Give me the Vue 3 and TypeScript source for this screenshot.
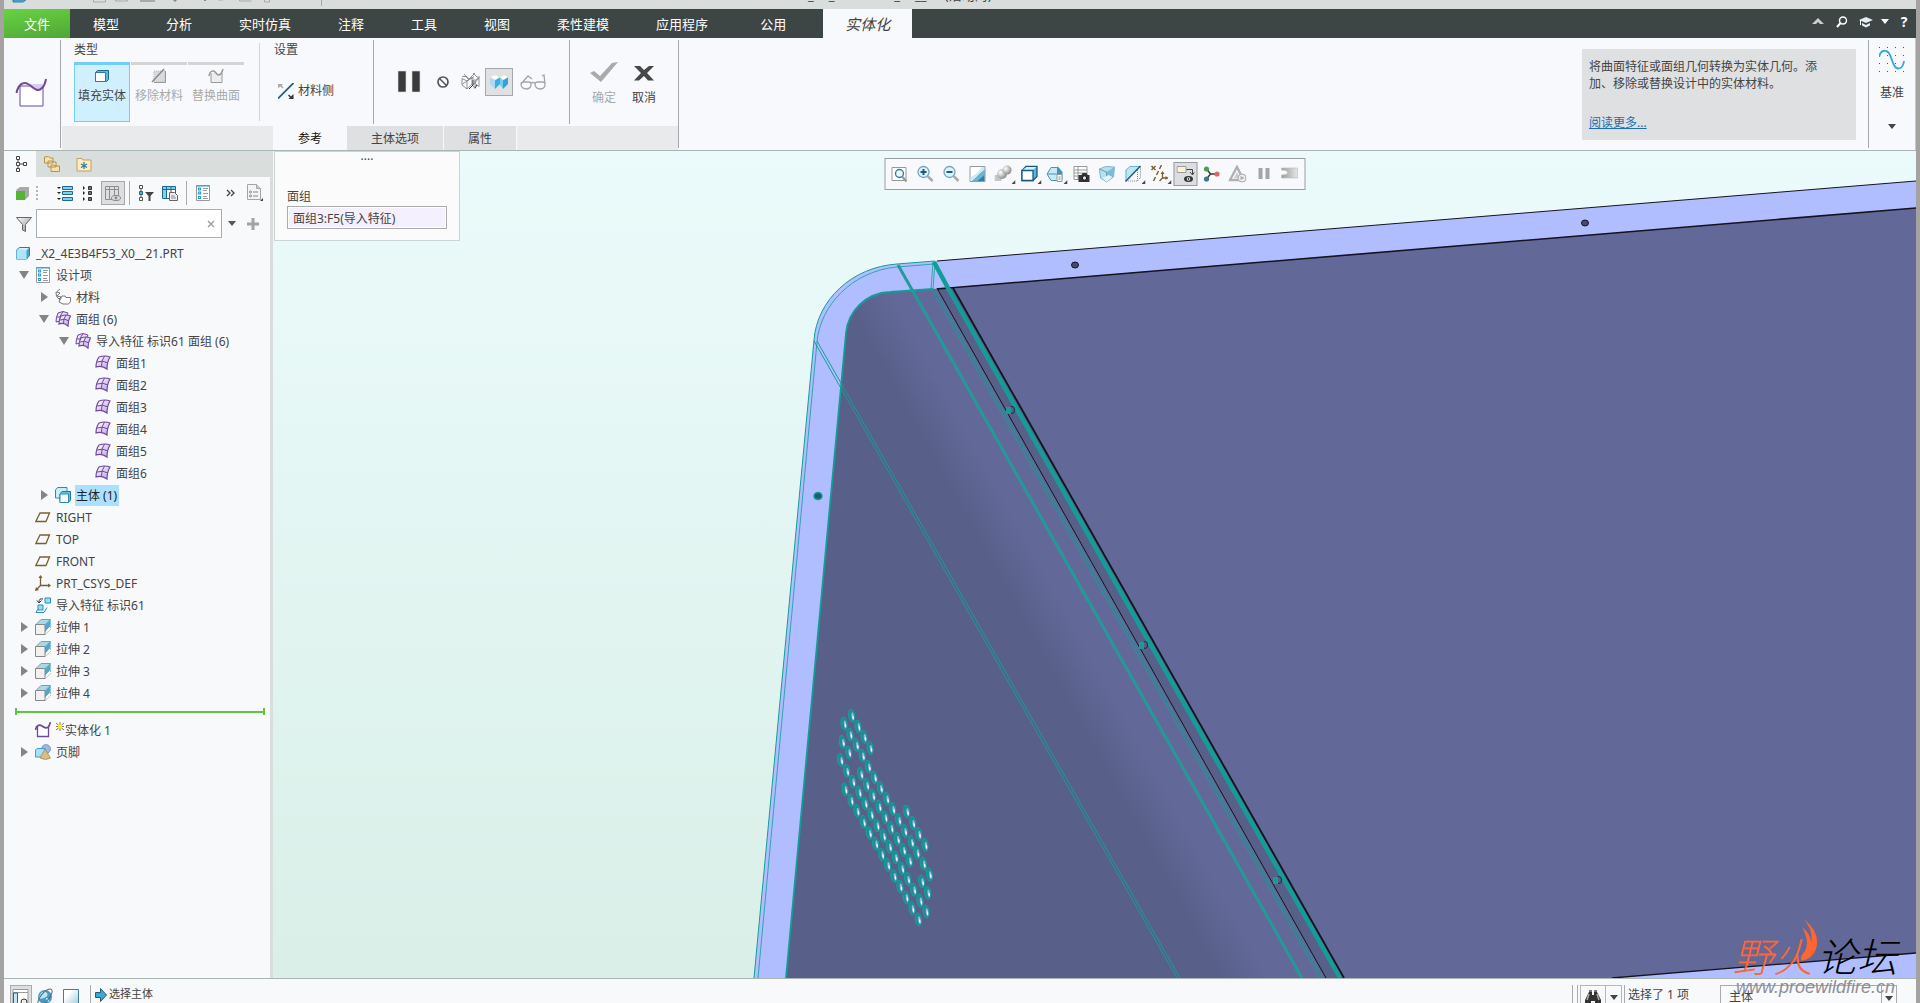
<script setup lang="ts">
import { ref } from 'vue'

interface TreeRow {
  label: string
  icon: string
  level: number
  state?: 'open' | 'closed'
  selected?: boolean
}

const menuTabs: string[] = ['模型', '分析', '实时仿真', '注释', '工具', '视图', '柔性建模', '应用程序']

const modelRows: TreeRow[] = [
  { label: '_X2_4E3B4F53_X0__21.PRT', icon: 'part', level: 0 },
  { label: '设计项', icon: 'items', level: 1, state: 'open' },
  { label: '材料', icon: 'material', level: 2, state: 'closed' },
  { label: '面组 (6)', icon: 'quilts', level: 2, state: 'open' },
  { label: '导入特征 标识61 面组 (6)', icon: 'quilts', level: 3, state: 'open' },
  { label: '面组1', icon: 'quilt', level: 4 },
  { label: '面组2', icon: 'quilt', level: 4 },
  { label: '面组3', icon: 'quilt', level: 4 },
  { label: '面组4', icon: 'quilt', level: 4 },
  { label: '面组5', icon: 'quilt', level: 4 },
  { label: '面组6', icon: 'quilt', level: 4 },
  { label: '主体 (1)', icon: 'bodies', level: 2, state: 'closed', selected: true },
  { label: 'RIGHT', icon: 'plane', level: 1 },
  { label: 'TOP', icon: 'plane', level: 1 },
  { label: 'FRONT', icon: 'plane', level: 1 },
  { label: 'PRT_CSYS_DEF', icon: 'csys', level: 1 },
  { label: '导入特征 标识61', icon: 'import', level: 1 },
  { label: '拉伸 1', icon: 'extrude', level: 1, state: 'closed' },
  { label: '拉伸 2', icon: 'extrude', level: 1, state: 'closed' },
  { label: '拉伸 3', icon: 'extrude', level: 1, state: 'closed' },
  { label: '拉伸 4', icon: 'extrude', level: 1, state: 'closed' },
]

const viewTools: { icon: string; name: string; menu?: boolean; on?: boolean }[] = [
  { icon: 'refit', name: '重新调整' },
  { icon: 'zoomin', name: '放大' },
  { icon: 'zoomout', name: '缩小' },
  { icon: 'repaint', name: '重画' },
  { icon: 'render', name: '渲染选项', menu: true },
  { icon: 'style', name: '显示样式', menu: true },
  { icon: 'saved', name: '已保存方向', menu: true },
  { icon: 'viewmgr', name: '视图管理器' },
  { icon: 'persp', name: '透视图' },
  { icon: 'section', name: '截面', menu: true },
  { icon: 'datumshow', name: '基准显示过滤器', menu: true },
  { icon: 'annot', name: '注释显示', on: true },
  { icon: 'spin', name: '旋转中心' },
  { icon: 'simul', name: '仿真' },
  { icon: 'pausegrey', name: '暂停仿真' },
  { icon: 'simres', name: '仿真结果' },
]

/* Speaker perforations, in thirds of a scene unit from the grille's corner */
const holes: number[][] = [
  [95, 77], [72, 101], [114, 109], [90, 133], [132, 141], [67, 156], [109, 165], [150, 174],
  [86, 187], [127, 197], [62, 210], [145, 230], [80, 243], [122, 252], [163, 262], [98, 275],
  [140, 285], [181, 294], [75, 298], [117, 307], [158, 317], [200, 326], [93, 331], [135, 340],
  [177, 350], [218, 357], [260, 364], [111, 363], [153, 373], [195, 382], [236, 390], [278, 399],
  [130, 396], [171, 406], [213, 414], [254, 423], [296, 432], [148, 429], [190, 438], [232, 447],
  [274, 456], [315, 465], [167, 461], [208, 470], [250, 480], [291, 488], [185, 493], [226, 502],
  [268, 512], [310, 521], [203, 525], [245, 535], [328, 553], [222, 558], [263, 567], [305, 574],
  [240, 590], [281, 599], [323, 608], [258, 622], [300, 632], [276, 655], [318, 664], [295, 688],
]

const sidePins: number[][] = [[1009, 410], [1142, 645], [1276, 880]]

const search = ref('')
const quilt = ref('面组3:F5(导入特征)')
</script>

<template>
  <svg class="sprite" aria-hidden="true">
    <defs>
      <linearGradient id="g-blue" x1="0" y1="0" x2="1" y2="1">
        <stop offset="0" stop-color="#e8f8ff" /><stop offset="1" stop-color="#5fb8e0" />
      </linearGradient>
      <linearGradient id="g-quilt" x1="0" y1="0" x2="1" y2="1">
        <stop offset="0" stop-color="#ffffff" /><stop offset="1" stop-color="#b9a0e0" />
      </linearGradient>
      <linearGradient id="g-grey" x1="0" y1="0" x2="1" y2="1">
        <stop offset="0" stop-color="#ffffff" /><stop offset="1" stop-color="#8a8a8a" />
      </linearGradient>
      <linearGradient id="g-flap" x1="0" y1="0" x2="1" y2="0">
        <stop offset="0" stop-color="#9a9a9a" /><stop offset="1" stop-color="#e6e6e6" />
      </linearGradient>
      <linearGradient id="g-page" x1="0" y1="0" x2="1" y2="1">
        <stop offset="0.3" stop-color="#ffffff" /><stop offset="1" stop-color="#9cc8dc" />
      </linearGradient>
      <radialGradient id="g-ball" cx="0.35" cy="0.35" r="0.8">
        <stop offset="0" stop-color="#fff" /><stop offset="1" stop-color="#777" />
      </radialGradient>
    </defs>
    <symbol id="i-solidify" viewBox="0 0 32 32">
      <path d="M5 8h23v20H5z" fill="#fff" stroke="#6b4b9b" />
      <path d="M11 6h17v3q-4 5-8 3z" fill="#d9ccf2" />
      <path d="M1.500 15C3 7 8 3 13 6s9 9 14 4q3-3 4-9" fill="none" stroke="#70479c" stroke-width="2" />
    </symbol>
    <symbol id="i-solidsmall" viewBox="0 0 16 16">
      <path d="M2.500 5v9.500h11V5" fill="#fff" stroke="#6b4b9b" stroke-width="1.300" />
      <path d="M.5 8C1 4 4 2 7 4s5 3 7 0l1.500-4" fill="none" stroke="#70479c" stroke-width="1.700" />
    </symbol>
    <symbol id="i-fill" viewBox="0 0 16 16">
      <path d="M1.500 4.500l2-2h11v9l-2 2h-11z" fill="#5fb8e0" stroke="#1f6b8f" />
      <path d="M1.500 4.500h10v9h-10z" fill="#fff" stroke="#2d7da3" />
    </symbol>
    <symbol id="i-remove" viewBox="0 0 16 16">
      <path d="M3 3h11v11H3z" fill="#d9dadc" stroke="#b5b5b5" stroke-dasharray="1 1" />
      <path d="M14.500 3v11.500H3" fill="none" stroke="#999" /><path d="M1 14L13 1" stroke="#8c8c8c" stroke-width="1.500" />
    </symbol>
    <symbol id="i-replace" viewBox="0 0 16 16">
      <path d="M3 5v9.500h11V5" fill="#ededee" stroke="#9a9a9a" />
      <path d="M1 8C2 2 6 2 8 5s5 3 7-4" fill="none" stroke="#999" stroke-width="1.500" />
    </symbol>
    <symbol id="i-side" viewBox="0 0 16 16">
      <path d="M0 15.500L15.500 0" stroke="#1c6285" stroke-width="1.800" />
      <path d="M0 1h5L3.500 2.500l2 2-1 1-2-2L0 5z" fill="#aaa" /><path d="M15.500 16h-5l1.500-1.500-2-2 1-1 2 2 2.500-2.500z" fill="#333" />
    </symbol>
    <symbol id="i-pause" viewBox="0 0 24 24"><path d="M1 1h8v21H1zM15 1h8v21h-8z" fill="#3b3b3b" stroke="#ddd" stroke-width=".6" /></symbol>
    <symbol id="i-none" viewBox="0 0 16 16"><circle cx="8" cy="8" r="5" fill="none" stroke="#555" stroke-width="1.700" /><path d="M4.500 4.500l7 7" stroke="#555" stroke-width="1.500" /></symbol>
    <symbol id="i-wire" viewBox="0 0 20 20">
      <path d="M1 4.500h5l2 3-2 1.500-5-2.500v6.500l5 4 5-5V5.500L8 7.500M6 9v8M11 5.500l3 3 4-3v9l-4-3V8.500M14 8.500v8l-3-4M6 9l8-8M1.500 12L13 4.500M12 1l4 4h3M3 2l4 5M18 6l-7 8" fill="none" stroke="#858585" stroke-width=".9" />
      <path d="M8 17l4-4V8M14 16l2-3" fill="none" stroke="#333" />
    </symbol>
    <symbol id="i-shade" viewBox="0 0 20 20">
      <path d="M1 5l5 3v9l-5-5z" fill="#a6dcf5" /><path d="M6 8l5-3v7l-5 5z" fill="#3aaee4" /><path d="M11 5l3 3v9l-3-4z" fill="#7accee" /><path d="M14 8l5-3v7l-5 5z" fill="#2ea4de" />
      <path d="M1 5l5-2 5 2-5 3zM11 5l4-2 4 2-5 3z" fill="#fff" stroke="#e8e0c8" stroke-width=".6" />
    </symbol>
    <symbol id="i-glasses" viewBox="0 0 26 16">
      <g fill="none" stroke="#a5a5a5" stroke-width="1.300"><path d="M1 10q0-2 3-2h5q2 0 2 3t-4 4q-6 0-6-5zM15 10q0-2 3-2h5q2 0 2 3t-4 4q-6 0-6-5zM11 9q2-1 4 0M1 10L8 2l4 3M25 10l-1-9-2 1" /></g>
    </symbol>
    <symbol id="i-ok" viewBox="0 0 28 28"><path d="M0 14l4-2 6 5L22 4l6-1L11 23z" fill="#aaa" /></symbol>
    <symbol id="i-cancel" viewBox="0 0 28 28"><path d="M4 7h6l4 4 5-4h5l-7 7 7 7.500h-6L14 17l-5 4.500H4l7-7.500z" fill="#484848" /></symbol>
    <symbol id="i-sine" viewBox="0 0 26 26">
      <g fill="#555"><path d="M0 0h1v1H0zM8 0h1v1H8zM16 0h1v1h-1zM24 0h1v1h-1zM0 8h1v1H0zM8 8h1v1H8zM16 8h1v1h-1zM24 8h1v1h-1zM0 16h1v1H0zM8 16h1v1H8zM16 16h1v1h-1zM24 16h1v1h-1zM0 24h1v1H0zM8 24h1v1H8zM16 24h1v1h-1zM24 24h1v1h-1z" /></g>
      <path d="M0 10c1-5 4-7 7-6 5 1 5 9 8 14 3 6 9 4 10-4" fill="none" stroke="#3aa6d8" stroke-width="1.800" />
    </symbol>
    <symbol id="i-search" viewBox="0 0 12 12"><circle cx="7" cy="4.500" r="3.500" fill="none" stroke="#fff" stroke-width="1.500" /><path d="M4.500 7L1 11" stroke="#fff" stroke-width="2" /></symbol>
    <symbol id="i-learn" viewBox="0 0 14 12"><path d="M0 4l7-3 7 3-7 3zM3 7l4 2 4-2v2.500L7 11.500l-4-2z" fill="#e4eef5" /><path d="M1.500 4v5" stroke="#fff" /></symbol>
    <symbol id="i-up" viewBox="0 0 12 12"><path d="M0 8l6-6 6 6H8L6 6 4 8z" fill="#ccd0d0" /></symbol>
    <symbol id="i-down" viewBox="0 0 8 5"><path d="M0 0h8L4 5z" fill="currentColor" /></symbol>

    <symbol id="i-nav-tree" viewBox="0 0 16 16"><g fill="none" stroke="#444"><path d="M2.500 .5h3v3h-3zM2.500 6.500h3v3h-3zM2.500 12.500h3v3h-3zM9.500 6.500h3v3h-3z" /><path d="M4 4v2M4 10v2M6 8h3" /></g></symbol>
    <symbol id="i-nav-folders" viewBox="0 0 16 16"><g fill="#f7e2ae" stroke="#a98a4b" stroke-width=".9"><path d="M.5 1l4-.5L6 2h3v5H.5zM4 5h4l1 1h3v5H4zM7 9h3l1 1h4.500v5.500H7z" /></g></symbol>
    <symbol id="i-nav-fav" viewBox="0 0 16 16"><path d="M1 2.500h5l1 1.500h8v11H1z" fill="#fdecbf" stroke="#b99a5a" stroke-width=".9" /><path d="M8 6v7M5 8l6 3.500M11 8l-6 3.500" stroke="#2b7ca6" stroke-width="1.200" /></symbol>
    <symbol id="i-cubegreen" viewBox="0 0 16 16"><path d="M1 5l4-3h9v9l-4 4z" fill="#a8a8a8" /><path d="M1 6h9v9H1z" fill="#55b435" /></symbol>
    <symbol id="i-expand" viewBox="0 0 16 16"><g fill="#7fd0ee" stroke="#1f6b8f"><path d="M5.500 1.500h10v3h-10zM5.500 6.500h10v3h-10zM5.500 12.500h10v3h-10z" /></g><path d="M0 2h4L2 4zM0 7h4L2 9zM0 13h4l-2 2z" fill="#222" /></symbol>
    <symbol id="i-collapse" viewBox="0 0 16 16"><path d="M7.500 1.500h3v3h-3zM7.500 6.500h3v3h-3zM7.500 12.500h3v3h-3z" fill="#777" stroke="#333" /><path d="M2 1l2 2-2 2zM2 6l2 2-2 2zM2 12l2 2-2 2z" fill="#222" /></symbol>
    <symbol id="i-colview" viewBox="0 0 16 16"><path d="M.5 1.500h13v13H.5zM.5 4.500h13M4.500 2v12M9.500 2v12" fill="none" stroke="#8c8c8c" /><ellipse cx="11" cy="13" rx="4.500" ry="2.500" fill="#ddd" stroke="#888" /><circle cx="11" cy="13" r="1.400" fill="#888" /></symbol>
    <symbol id="i-treefilter" viewBox="0 0 16 16"><path d="M1.500 .5h3v3h-3zM1.500 12.500h3v3h-3z" fill="#fff" stroke="#555" /><path d="M1.500 6.500h3v3h-3z" fill="#4db6e0" stroke="#1f6b8f" /><path d="M3 4v2M3 10v2" stroke="#555" /><path d="M7 7h9l-3.500 4v5h-2v-5z" fill="#444" /></symbol>
    <symbol id="i-treecols" viewBox="0 0 16 16"><path d="M.5 1.500h13v12H.5z" fill="#fff" stroke="#1f6b8f" /><path d="M1 2h12v3H1zM1 5h4v8H1z" fill="#7fd0ee" /><path d="M.5 4.500h13M4.500 2v12M9 2v6" stroke="#1f6b8f" /><path d="M7.500 7.500h5l3 3v5h-8z" fill="#eee" stroke="#666" /><path d="M9 11h4M9 13h5" stroke="#888" /></symbol>
    <symbol id="i-items" viewBox="0 0 16 16"><path d="M1.500 .5h13v15h-13z" fill="#fff" stroke="#9a9a9a" /><path d="M1 1h14" stroke="#2b9dcc" /><g fill="none" stroke="#2b9dcc" stroke-width="1.200"><path d="M3.500 3h2v2h-2zM3.500 7h2v2h-2zM3.500 11.500h2v2h-2z" /></g><path d="M8 3.500h5M8 5.500h4M8 8.500h5M8 11.500h4M8 13.500h5" stroke="#999" /></symbol>
    <symbol id="i-more" viewBox="0 0 16 16"><path d="M4 5l3 3-3 3M8 5l3 3-3 3" fill="none" stroke="#444" stroke-width="1.300" /></symbol>
    <symbol id="i-docset" viewBox="0 0 18 18"><path d="M1.500 .5h9l4 4v11h-13z" fill="#f4f4f6" stroke="#a5a5a8" /><path d="M10.500 .5v4h4" fill="#ccc" stroke="#a5a5a8" /><path d="M7 8h5M7 12h5" stroke="#888" /><circle cx="4.500" cy="8" r="1" fill="none" stroke="#888" /><circle cx="4.500" cy="12" r="1" fill="none" stroke="#888" /><path d="M17 14v3h-3z" fill="#444" /></symbol>
    <symbol id="i-funnel" viewBox="0 0 16 16"><path d="M.5 1.500h15l-6 7v7l-3-1.500V8.500z" fill="url(#g-grey)" stroke="#666" /></symbol>
    <symbol id="i-plus" viewBox="0 0 12 12"><path d="M4.500 0h3v4.500H12v3H7.500V12h-3V7.500H0v-3h4.500z" fill="#a2a2a2" /></symbol>

    <symbol id="i-part" viewBox="0 0 16 16"><path d="M1.500 5l3-2.500h10v8l-3 3.500h-10z" fill="#4aa5d0" stroke="#2b7ca6" /><path d="M1.500 5h10v9h-10z" fill="#aee6fb" /><path d="M2 4.700L4.700 3H14l-2.500 2z" fill="#d8f3fd" /></symbol>
    <symbol id="i-material" viewBox="0 0 16 16"><path d="M6 9l1-2h3l1 1.500h4.500v4L13.500 15H8L4 13z" fill="#fff" stroke="#777" /><path d="M5 0L1.500 3 5 4 2 7l4 1-2 2M1 3q-1 5 4 8" fill="none" stroke="#777" /></symbol>
    <symbol id="i-quilt" viewBox="0 0 16 16"><path d="M4 2Q10 0 15 2q-3 5-3 12Q7 10 1 12 1 6 4 2z" fill="url(#g-quilt)" stroke="#70479c" stroke-width="1.200" /><path d="M9.500 1Q6 6 6.500 11.500M2 7q6-2 11 1" fill="none" stroke="#70479c" /></symbol>
    <symbol id="i-quilts" viewBox="0 0 16 16"><path d="M3 2q5-3 10 0-3 5-3 9-5-2-9 0 0-5 2-9z" fill="#ece4f8" stroke="#70479c" /><path d="M6 5q5-2 9.500 0Q13 9 13 15q-4-4-9-2 0-5 2-8z" fill="url(#g-quilt)" stroke="#70479c" stroke-width="1.200" /><path d="M11 4Q8 8 8.500 13M5 9q5-2 9 1M8 1Q6 3 5 6M2 6h3" fill="none" stroke="#70479c" /></symbol>
    <symbol id="i-bodies" viewBox="0 0 16 16"><path d="M.5 3l2-2.500H12v8l-2 2.500H.5z" fill="#c8eefb" stroke="#2b8db5" /><path d="M5 7l2-2.500h8.500V13l-2 2.500H5z" fill="#62c0e4" stroke="#1f7ba3" /><path d="M5 7h8.500v8.500H5z" fill="#fff" stroke="#2b8db5" /></symbol>
    <symbol id="i-plane" viewBox="0 0 16 16"><path d="M5 4h9.500L11 12.500H.8z" fill="none" stroke="#7a5f2f" stroke-width="1.300" /></symbol>
    <symbol id="i-csys" viewBox="0 0 16 16"><path d="M5.500 1v9.500H15M5.500 10.500L1 15" fill="none" stroke="#7a5f2f" stroke-width="1.300" /><path d="M5.500 0L3.500 3h4zM16 10.500l-3-2v4zM0 16l1-4 3 3z" fill="#7a5f2f" /></symbol>
    <symbol id="i-import" viewBox="0 0 16 16"><path d="M10 1h5.500v5H10z" fill="#9adcf5" stroke="#2b8db5" /><path d="M3 8h5v5H3z" fill="#9adcf5" stroke="#2b8db5" /><path d="M3 12l-2 3.500h8l3-5" fill="none" stroke="#2b8db5" /><path d="M8 2Q4 1 4 5M2 3.500L4 6l2.500-2.500" fill="none" stroke="#333" /></symbol>
    <symbol id="i-extrude" viewBox="0 0 16 16"><path d="M1 5.500L6 .5h9.500l-5.500 5z" fill="#a5d9ec" stroke="#8f9a9f" /><path d="M10 6l5.500-5.500V7L10 13z" fill="#4fa9ce" /><path d="M10 13l5.500-6v4L10.500 15.500z" fill="#fff" /><path d="M15.500 1v9.500l-5 5" fill="none" stroke="#7fc0d8" stroke-dasharray="2 1" /><path d="M.5 5.500H10v10H.5z" fill="#f1f1f1" stroke="#888" /></symbol>
    <symbol id="i-footer" viewBox="0 0 16 16"><circle cx="11" cy="5" r="4.500" fill="#9fb5e6" stroke="#6d86bd" stroke-width=".7" /><path d="M.5 6l1.500-1.500h8V11L8 13H.5z" fill="#a6e1f6" stroke="#3f9fc4" /><path d="M10 5l5.500 9q-4.500 3-10.500 0z" fill="#ddbd86" stroke="#9d7d4c" stroke-width=".7" /></symbol>

    <symbol id="i-refit" viewBox="0 0 18 18"><path d="M1.500 2.500h14v13h-14z" fill="#fff" stroke="#999" /><circle cx="9" cy="8.500" r="4" fill="#eaf7fd" stroke="#3a7c9b" stroke-width="1.400" /><path d="M12 12l4 4.500" stroke="#999" stroke-width="2.200" /></symbol>
    <symbol id="i-zoomin" viewBox="0 0 18 18"><circle cx="7" cy="7" r="5.500" fill="#def2fb" stroke="#6fa5bd" stroke-width="1.300" /><path d="M4 7h6M7 4v6" stroke="#165f86" stroke-width="2" /><path d="M11 11l5 5" stroke="#aaa" stroke-width="2.500" /></symbol>
    <symbol id="i-zoomout" viewBox="0 0 18 18"><circle cx="7" cy="7" r="5.500" fill="#def2fb" stroke="#6fa5bd" stroke-width="1.300" /><path d="M4 7h6" stroke="#165f86" stroke-width="2" /><path d="M11 11l5 5" stroke="#aaa" stroke-width="2.500" /></symbol>
    <symbol id="i-repaint" viewBox="0 0 18 18"><path d="M1.500 1.500h15v15h-15z" fill="#fff" stroke="#9a9a9a" /><path d="M16 2v14H5z" fill="#2d7fa7" /><path d="M2 16Q9 11 16 5V2h-3Q10 9 2 12z" fill="#cde9f5" /><path d="M3 16L16 5v5L9 16z" fill="#6db4d3" /></symbol>
    <symbol id="i-render" viewBox="0 0 18 18"><path d="M0 10h7v6H0z" fill="#c6c6c6" /><circle cx="7.500" cy="9" r="5" fill="url(#g-ball)" /><circle cx="12.500" cy="5" r="4.500" fill="url(#g-ball)" /></symbol>
    <symbol id="i-style" viewBox="0 0 18 18"><path d="M1.500 5.500l4-4h11v10l-4 4h-11z" fill="#62b3d6" stroke="#155a7c" stroke-width="1.300" /><path d="M2 5l4-3h10l-4 3.500z" fill="#d4eef8" /><path d="M1.500 5.500h11v10h-11z" fill="#fff" stroke="#155a7c" stroke-width="1.300" /></symbol>
    <symbol id="i-saved" viewBox="0 0 18 18"><path d="M.5 9l4-6.500H11v13H4.500z" fill="#c8e8f4" stroke="#4a93b3" /><path d="M11 1l5 6v8h-5z" fill="#3f95bb" /><path d="M1 9h10" stroke="#4a93b3" /><path d="M10.500 9.500h5v7h-5z" fill="#fff" stroke="#999" /><path d="M12 12h2M12 14h2" stroke="#888" /></symbol>
    <symbol id="i-viewmgr" viewBox="0 0 18 18"><path d="M1.500 1.500h13v13h-13zM1.500 5h13M1.500 8h13M1.500 11h13M5.500 2v12" fill="#fff" stroke="#999" /><path d="M6 10h3l1-2h4l1 2h2v7H6z" fill="#333" /><circle cx="12" cy="13" r="2.200" fill="#ddd" stroke="#111" /></symbol>
    <symbol id="i-persp" viewBox="0 0 18 18"><path d="M1 4l6-2.500L16 2l-1 10-7 5-6-4z" fill="#b9dfee" stroke="#7fb5cc" /><path d="M8 7l8-5-1 10-7 5z" fill="#7ebbd4" /><path d="M1 4l7 3v10" fill="none" stroke="#5c9fbc" /><path d="M4 13l6-3 4 2-6 5z" fill="#e6f5fa" /></symbol>
    <symbol id="i-section" viewBox="0 0 18 18"><path d="M1 5l4-3h11L2 15H1z" fill="#bfe6f5" /><path d="M1.500 16V5l4-3.500H16" fill="none" stroke="#6fb2cd" /><path d="M16 1.500v11l-3 3.500H2M13 5v11" fill="none" stroke="#888" stroke-dasharray="1 1" /><path d="M1 16.500L16 1" stroke="#1b5f80" stroke-width="1.500" /></symbol>
    <symbol id="i-datumshow" viewBox="0 0 18 18"><path d="M1 1l4 4M5 1L1 5M11 0L9 4M8 6l-2 4M5 12l-2 4" stroke="#7a5f2f" stroke-width="1.500" /><path d="M12 8v5h5M12 13l-3 3" fill="none" stroke="#7a5f2f" stroke-width="1.300" /><path d="M12 6l-2 3h4zM18 13l-3-2v4z" fill="#7a5f2f" /></symbol>
    <symbol id="i-annot" viewBox="0 0 18 18"><path d="M.5 1.500h9v6h-9z" fill="#fdf3cf" stroke="#9a9a9a" /><path d="M10 4.500h6v5M13.500 7L16 10l2-3" fill="none" stroke="#444" /><ellipse cx="12" cy="14" rx="4.500" ry="3" fill="#333" /><circle cx="12" cy="14" r="1.800" fill="#fff" /><circle cx="12" cy="14" r=".9" fill="#333" /></symbol>
    <symbol id="i-spin" viewBox="0 0 18 18"><path d="M4 4l4 5-4 5M8 9h6" fill="none" stroke="#333" stroke-width="1.400" /><circle cx="4" cy="4" r="2.600" fill="#4f9e55" /><circle cx="4" cy="14" r="2.600" fill="#3d7795" /><circle cx="14.500" cy="9" r="2.600" fill="#d9696b" /></symbol>
    <symbol id="i-simul" viewBox="0 0 18 18"><path d="M8.500 2L15 15H1.500z" fill="none" stroke="#b0b0b0" stroke-width="2.400" /><path d="M8.500 7l3 6h-6z" fill="#ccc" /><circle cx="13.500" cy="13" r="4" fill="#eee" stroke="#aaa" /><path d="M12 11l4 2-4 2z" fill="#aaa" /></symbol>
    <symbol id="i-pausegrey" viewBox="0 0 18 18"><path d="M4 3h4v11H4zM11 3h4v11h-4z" fill="#a5a5a5" /></symbol>
    <symbol id="i-simres" viewBox="0 0 18 18"><path d="M1 3h16v10H1v-3q6 0 6-2.500T1 5z" fill="url(#g-flap)" stroke="#c0c0c0" stroke-width=".7" /></symbol>

    <symbol id="i-navpane" viewBox="0 0 18 18"><path d="M1 1.500h15v15H1z" fill="#fff" stroke="#999" /><path d="M1 4.500h15" stroke="#999" /><path d="M1.500 5h4v11h-4z" fill="#c5e6f3" stroke="#1f6b8f" /><circle cx="12" cy="14" r="3" fill="#eee" stroke="#333" /></symbol>
    <symbol id="i-globe" viewBox="0 0 18 18"><circle cx="9" cy="9" r="7" fill="#3d9ccc" /><path d="M5 5q4-3 6 0t-3 5-5-1zM10 10q4 0 3 4-3 0-3-4z" fill="#bfe4f3" /><ellipse cx="9" cy="9" rx="10" ry="4" transform="rotate(-50 9 9)" fill="none" stroke="#666" /></symbol>
    <symbol id="i-page" viewBox="0 0 18 18"><path d="M1.500 1.500h15v16h-15z" fill="url(#g-page)" stroke="#3f7f9b" /></symbol>
    <symbol id="i-prompt" viewBox="0 0 12 14"><path d="M.5 4.500h5v-4L11.500 7l-6 6.500v-4h-5z" fill="#3fa8cf" stroke="#1f5f7d" /></symbol>
    <symbol id="i-find" viewBox="0 0 18 18"><path d="M5 4h3v3h2V4h3l4 8v5h-6v-4H7v4H1v-5z" fill="#333" /><path d="M5 6l-2 6M13 6l2 6" stroke="#aaa" stroke-width="1.500" /><path d="M5 2h3v2H5zM10 2h3v2h-3z" fill="#777" /></symbol>
  </svg>

  <div class="window">
    <header class="titlebar">
      <svg class="quick" viewBox="0 0 330 9" aria-hidden="true">
        <path d="M9 0h10l3-1v1l-3 2H9z" fill="#5fb8e0" stroke="#2b7ca6" />
        <path d="M89.500 0v2h12V0M111.500 0v1h12V0M214 0h5M235.500 0v1h12M260.500 0v2h5V0" fill="none" stroke="#aaa" />
        <path d="M136 0h15v2h-15z" fill="#aaa" /><path d="M169 0h4l-2 2zM200 0h2v1h-2z" fill="#888" />
        <path d="M317.500 0v6" stroke="#a5a9a9" />
      </svg>
      <span class="caption">_X2_4E3B4F53_X0__21 (活动的)</span>
    </header>

    <nav class="menubar">
      <button class="tab file">文件</button>
      <button v-for="t in menuTabs" :key="t" class="tab">{{ t }}</button>
      <button class="tab tail">公用</button>
      <button class="tab current">实体化</button>
      <div class="menu-tools">
        <button aria-label="最小化功能区"><svg width="12" height="12"><use href="#i-up" /></svg></button>
        <button aria-label="命令搜索"><svg width="12" height="12"><use href="#i-search" /></svg></button>
        <button aria-label="学习"><svg width="14" height="12"><use href="#i-learn" /></svg></button>
        <button aria-label="更多" class="slim"><svg width="8" height="5"><use href="#i-down" /></svg></button>
        <button class="help">?</button>
      </div>
    </nav>

    <section class="ribbon">
      <div class="feature"><svg width="32" height="32"><use href="#i-solidify" /></svg></div>
      <i class="vline"></i>
      <div class="dash">
        <div class="groups">
          <div class="group kinds">
            <h2>类型</h2>
            <div class="kind-row">
              <button class="kind on"><svg width="16" height="16"><use href="#i-fill" /></svg>填充实体</button>
              <button class="kind" disabled><svg width="16" height="16"><use href="#i-remove" /></svg>移除材料</button>
              <button class="kind" disabled><svg width="16" height="16"><use href="#i-replace" /></svg>替换曲面</button>
            </div>
          </div>
          <i class="vline soft"></i>
          <div class="group settings">
            <h2>设置</h2>
            <button class="side"><svg width="16" height="16"><use href="#i-side" /></svg>材料侧</button>
          </div>
          <i class="vline mid"></i>
          <div class="group controls">
            <button class="wide" aria-label="暂停"><svg width="24" height="24"><use href="#i-pause" /></svg></button>
            <button aria-label="无预览"><svg width="16" height="16"><use href="#i-none" /></svg></button>
            <button aria-label="分离预览"><svg width="20" height="20"><use href="#i-wire" /></svg></button>
            <button class="on" aria-label="连接预览"><svg width="20" height="20"><use href="#i-shade" /></svg></button>
            <button class="wide" aria-label="特征预览"><svg width="26" height="16"><use href="#i-glasses" /></svg></button>
          </div>
          <i class="vline mid"></i>
          <div class="group finish">
            <button disabled><svg width="28" height="28"><use href="#i-ok" /></svg>确定</button>
            <button><svg width="28" height="28"><use href="#i-cancel" /></svg>取消</button>
          </div>
        </div>
        <div class="subtabs">
          <span class="lead"></span>
          <button class="sub active">参考</button>
          <button class="sub">主体选项</button>
          <button class="sub">属性</button>
          <span class="rest"></span>
        </div>
      </div>
      <i class="vline"></i>
      <aside class="tip">
        <p>将曲面特征或面组几何转换为实体几何。添加、移除或替换设计中的实体材料。</p>
        <a href="#">阅读更多...</a>
      </aside>
      <i class="vline"></i>
      <button class="datum">
        <svg width="26" height="26"><use href="#i-sine" /></svg>
        <span>基准</span>
        <svg width="8" height="5"><use href="#i-down" /></svg>
      </button>
    </section>

    <main class="work">
      <aside class="nav">
        <div class="nav-tabs">
          <button class="active" aria-label="模型树"><svg width="16" height="16"><use href="#i-nav-tree" /></svg></button>
          <button aria-label="文件夹浏览器"><svg width="16" height="16"><use href="#i-nav-folders" /></svg></button>
          <button aria-label="收藏夹"><svg width="16" height="16"><use href="#i-nav-fav" /></svg></button>
        </div>
        <div class="nav-tools">
          <button aria-label="模型"><svg width="16" height="16"><use href="#i-cubegreen" /></svg></button>
          <i class="grip"></i>
          <button aria-label="全部展开"><svg width="16" height="16"><use href="#i-expand" /></svg></button>
          <button aria-label="全部折叠"><svg width="16" height="16"><use href="#i-collapse" /></svg></button>
          <button class="on" aria-label="显示列"><svg width="16" height="16"><use href="#i-colview" /></svg></button>
          <i class="bar"></i>
          <button aria-label="树过滤器"><svg width="16" height="16"><use href="#i-treefilter" /></svg></button>
          <button aria-label="树列"><svg width="16" height="16"><use href="#i-treecols" /></svg></button>
          <i class="bar"></i>
          <button aria-label="设计项"><svg width="16" height="16"><use href="#i-items" /></svg></button>
          <button class="more" aria-label="更多工具"><svg width="16" height="16"><use href="#i-more" /></svg></button>
          <button aria-label="设置"><svg width="18" height="18"><use href="#i-docset" /></svg></button>
        </div>
        <div class="finder">
          <svg class="funnel" width="16" height="16"><use href="#i-funnel" /></svg>
          <div class="field">
            <input v-model="search" type="text" aria-label="搜索模型树" />
            <button aria-label="清除" @click="search = ''"><svg width="8" height="8" viewBox="0 0 8 8"><path d="M1 1l6 6M7 1L1 7" stroke="#999" stroke-width="1.300" /></svg></button>
          </div>
          <button aria-label="搜索历史"><svg width="8" height="5"><use href="#i-down" /></svg></button>
          <button class="add" aria-label="添加"><svg width="12" height="12"><use href="#i-plus" /></svg></button>
        </div>

        <ul class="tree">
          <li v-for="(r, n) in modelRows" :key="n" :class="'lv' + r.level">
            <button v-if="r.level" class="twist" :class="r.state" :disabled="!r.state" :aria-label="r.label"></button>
            <svg width="16" height="16"><use :href="'#i-' + r.icon" /></svg>
            <span :class="{ picked: r.selected }">{{ r.label }}</span>
          </li>
        </ul>
        <div class="insert"></div>
        <ul class="tree tree-end">
          <li class="lv1">
            <i class="twist"></i>
            <svg width="16" height="16"><use href="#i-solidsmall" /></svg>
            <svg class="fresh" width="8" height="16" viewBox="0 0 8 16"><path d="M0 1l8 7M8 1L0 8M4 0v9M0 4.500h8" stroke="#444" stroke-width=".7" /><path d="M2 2.500h4v4H2z" fill="#ffec00" /></svg>
            <span class="tight">实体化 1</span>
          </li>
          <li class="lv1">
            <button class="twist closed" aria-label="页脚"></button>
            <svg width="16" height="16"><use href="#i-footer" /></svg>
            <span>页脚</span>
          </li>
        </ul>
      </aside>

      <div class="viewport">
        <svg class="scene" viewBox="273 151 1643 827" preserveAspectRatio="xMinYMin slice" aria-hidden="true">
          <defs>
            <linearGradient id="bend" gradientUnits="userSpaceOnUse" x1="842" y1="294" x2="880" y2="273">
              <stop offset="0" stop-color="#585f88" /><stop offset="1" stop-color="#626998" />
            </linearGradient>
          </defs>
          <path d="M754 978L814 340C817 300 852 267 897 264L935 261 1916 181V978z" fill="#b0beff" />
          <path d="M786 978L846 333C848 312 865 293 890 292L933 289 1916 208V953L1612 978z" fill="url(#bend)" />
          <path d="M937 288L953 287 1344 978H1326z" fill="#585f88" />
          <g fill="none" stroke="#15131f">
            <path d="M937 261L1916 181" />
            <path d="M937 289L1916 208" stroke-width="1.600" />
            <path d="M1612 978L1916 953" stroke-width="1.300" />
            <path d="M937 288L1326 978" />
            <path d="M953 288L1344 978" stroke-width="1.800" />
          </g>
          <g fill="none" stroke="#149d98">
            <path d="M754 978L814 340C817 300 852 267 897 264L935 261" />
            <path d="M758 978L817 342C820 306 852 271 897 267L934 264" stroke-width=".8" />
            <path d="M786 978L846 333C848 312 865 293 890 292L933 289" stroke-width="1.800" />
            <path d="M814 341L1177 978M817 341L1180 978" />
            <path d="M898 265L1302 978" stroke="#239a99" stroke-width="3" />
            <path d="M932 290L1320 978M935 290L1323 978" />
            <path d="M934 262L948 288 1340 978" stroke-width="4.500" />
            <path d="M935 262L933 289M933 262L931 290" stroke-width=".8" />
          </g>
          <g v-for="(p, n) in sidePins" :key="n">
            <ellipse :cx="p[0] + 3" :cy="p[1]" rx="2.500" ry="3.500" fill="none" stroke="#222538" />
            <rect :x="p[0] - 3" :y="p[1] - 3" width="5" height="7" fill="#1b9b96" />
          </g>
          <g stroke="#15131f"><ellipse cx="1075" cy="265" rx="3.500" ry="3" fill="#454a70" /><ellipse cx="1585" cy="223" rx="3.500" ry="3" fill="#454a70" /></g>
          <ellipse cx="818" cy="496" rx="4" ry="3.500" fill="#1c5d68" stroke="#149d98" stroke-width="1.500" />
          <g v-for="(h, n) in holes" :key="n" :transform="`translate(${820 + h[0] / 3} ${690 + h[1] / 3}) rotate(-8)`">
            <ellipse rx="3" ry="6.500" fill="#1b8f94" stroke="#12a39b" />
            <ellipse cx="1" cy="1" rx="1.200" ry="4" fill="#9fb4e0" />
            <ellipse cx="1.200" cy="2" rx=".7" ry="1.800" fill="#fff" />
          </g>
        </svg>

        <div class="view-tools">
          <button v-for="v in viewTools" :key="v.icon" :aria-label="v.name" :class="{ on: v.on, menu: v.menu }">
            <svg width="18" height="18"><use :href="'#i-' + v.icon" /></svg>
            <svg v-if="v.menu" class="corner" width="4" height="4" viewBox="0 0 4 4"><path d="M4 0v4H0z" fill="#444" /></svg>
          </button>
        </div>

        <div class="slide">
          <div class="dots">····</div>
          <label for="quilt">面组</label>
          <input id="quilt" v-model="quilt" type="text" readonly />
        </div>
      </div>
    </main>

    <footer class="status">
      <button class="on" aria-label="导航区"><svg width="18" height="18"><use href="#i-navpane" /></svg></button>
      <button aria-label="浏览器"><svg width="18" height="18"><use href="#i-globe" /></svg></button>
      <button aria-label="全屏"><svg width="18" height="18"><use href="#i-page" /></svg></button>
      <i class="bar first"></i>
      <svg class="prompt" width="12" height="14"><use href="#i-prompt" /></svg>
      <span class="message">选择主体</span>
      <i class="bar"></i><i class="bar"></i>
      <button class="find" aria-label="查找"><svg width="18" height="18"><use href="#i-find" /></svg></button>
      <button class="find-menu" aria-label="查找选项"><svg width="8" height="5"><use href="#i-down" /></svg></button>
      <i class="bar"></i>
      <span class="count">选择了 1 项</span>
      <div class="filter">
        <select aria-label="选择过滤器"><option>主体</option></select>
        <svg width="8" height="5"><use href="#i-down" /></svg>
      </div>
    </footer>

    <div class="mark">
      <div class="mark-name"><span class="fire">野火</span>论坛</div>
      <svg width="20" height="44" viewBox="0 0 20 44" aria-hidden="true"><path d="M5 0Q22 14 17 30 14 39 3 42 0 38 6 32 11 22 3 8 12 15 12 24 15 13 5 0z" fill="#ff6530" /></svg>
      <div class="mark-url">www.proewildfire.cn</div>
    </div>
  </div>
</template>

<style>
body {
  margin: 0;
  overflow: hidden;
}
</style>

<style scoped>
* {
  box-sizing: border-box;
}
.sprite {
  position: absolute;
  width: 0;
  height: 0;
}
.window {
  position: relative;
  display: flex;
  flex-direction: column;
  height: 100vh;
  border: solid #a5a2a2;
  border-width: 0 4px;
  background: #f8f9fc;
  color: #444;
  font: 12px/18px "Noto Sans", "Noto Sans CJK SC", sans-serif;
  overflow: hidden;
}
svg {
  display: block;
  flex: none;
}
button {
  display: flex;
  align-items: center;
  justify-content: center;
  padding: 0;
  border: 0;
  background: none;
  color: inherit;
  font: inherit;
  white-space: nowrap;
}
.titlebar {
  display: flex;
  flex: none;
  height: 9px;
  background: #d9dedd;
  overflow: hidden;
}
.quick {
  width: 330px;
  height: 9px;
}
.caption {
  margin: -14px auto 0 474px;
  font-size: 13px;
  white-space: nowrap;
}

/* Menu bar */
.menubar {
  display: flex;
  flex: none;
  height: 29px;
  background: #3d4545;
  color: #fff;
  font-size: 13px;
}
.tab {
  padding: 0 24px 0 23px;
}
.file {
  width: 66px;
  padding: 0;
  background: linear-gradient(170deg, #68d342, #50a537);
}
.tail {
  padding: 0 37px 0 28px;
}
.current {
  width: 89px;
  padding: 0;
  background: #f8f9fc;
  color: #444;
  font-size: 15px;
  font-style: italic;
}
.menu-tools {
  display: flex;
  align-items: center;
  margin: 0 0 4px auto;
}
.menu-tools button {
  width: 24px;
}
.menu-tools .slim {
  width: 14px;
}
.help {
  font-size: 14px;
  font-weight: 700;
}

/* Ribbon */
.ribbon {
  display: flex;
  flex: none;
  height: 113px;
  border-bottom: 1px solid #a9b5b5;
}
.feature {
  display: flex;
  align-items: center;
  justify-content: center;
  width: 56px;
  padding-right: 2px;
}
.vline {
  flex: none;
  width: 1px;
  margin: 2px 0;
  background: #a5a8ab;
}
.vline.soft {
  margin: 5px 0;
  background: #d3d5d8;
}
.dash {
  display: flex;
  flex-direction: column;
  width: 617px;
}
.groups {
  display: flex;
  height: 88px;
}
.group h2 {
  margin: 3px 0;
  font-size: 12px;
  font-weight: 400;
}
.kinds {
  width: 198px;
  padding-left: 13px;
}
.kind-row {
  display: flex;
  gap: 1px;
}
.kind {
  flex-direction: column;
  justify-content: flex-start;
  width: 56px;
  height: 60px;
  padding-top: 3px;
  border-top: 3px solid #d3d4d6;
}
.kind:disabled,
.finish button:disabled {
  color: #a9a9a9;
}
.kind svg {
  margin-bottom: 3px;
}
.kind.on {
  border: 1px solid #74cdf9;
  border-top-width: 3px;
  background: #d1f0ff;
}
.settings {
  width: 113px;
  padding-left: 14px;
}
.side {
  gap: 4px;
  height: 24px;
  margin-top: 20px;
  padding-left: 4px;
}
.controls {
  display: flex;
  align-items: center;
  width: 195px;
  padding-left: 15px;
}
.controls button {
  width: 28px;
  height: 28px;
}
.controls .wide {
  width: 40px;
}
.controls .on {
  border: 1px solid #a5a7a9;
  background: #dfe1e3;
}
.finish {
  display: flex;
  padding-left: 14px;
}
.finish button {
  flex-direction: column;
  justify-content: flex-start;
  gap: 2px;
  width: 40px;
  padding-top: 21px;
}
.subtabs {
  display: flex;
  gap: 1px;
  height: 24px;
}
.lead {
  width: 211px;
  margin-left: 1px;
  background: #e9eaeb;
}
.sub {
  padding: 2px 24px 0;
  background: #dfe0e2;
}
.sub.active {
  background: none;
  color: #111;
}
.rest {
  flex: 1;
  background: #e9eaeb;
}
.tip {
  width: 274px;
  margin: 11px 12px 10px auto;
  padding: 9px 7px;
  background: #dfe0e2;
  line-height: 17px;
}
.tip p {
  width: 236px;
  margin: 0 0 22px;
}
.tip a {
  color: #1b6fb0;
}
.datum {
  flex-direction: column;
  justify-content: flex-start;
  width: 47px;
  border-right: 1px solid #c5c8ca;
  padding-top: 9px;
}
.datum span {
  margin: 11px 0 22px;
}

/* Navigator */
.work {
  display: flex;
  flex: 1;
  min-height: 0;
}
.nav {
  width: 269px;
  border-right: 3px solid #d9dedd;
  background: #f7f9fb;
}
.nav-tabs {
  display: flex;
  height: 26px;
  background: #d9dedd;
}
.nav-tabs button {
  width: 32px;
}
.nav-tabs .active {
  padding-left: 3px;
  background: #f7f9fb;
}
.nav-tools {
  display: flex;
  align-items: center;
  height: 32px;
  padding-left: 7px;
}
.nav-tools button {
  width: 24px;
  height: 24px;
}
.nav-tools .on {
  border: 1px solid #a5a7a9;
  background: #dcdee0;
}
.nav-tools .more {
  margin-left: 4px;
}
.nav-tools .bar {
  height: 24px;
  margin: 0 4px;
}
.bar {
  flex: none;
  width: 1px;
  background: #a9acae;
}
.grip {
  width: 2px;
  height: 14px;
  margin: 0 15px 0 1px;
  background: repeating-linear-gradient(#b5b5b5 0 2px, transparent 2px 4px);
}
.finder {
  display: flex;
  align-items: center;
  height: 29px;
  padding-left: 12px;
  color: #555;
}
.field {
  display: flex;
  width: 186px;
  height: 29px;
  margin: 0 6px 0 4px;
  border: 1px solid #a3afb0;
  background: #fff;
}
.field input {
  flex: 1;
  min-width: 0;
  border: 0;
  outline: 0;
  background: none;
  font: inherit;
}
.field button {
  width: 20px;
}
.add {
  margin-left: 11px;
}
.tree {
  margin: 0;
  padding: 4px 0 0 11px;
  list-style: none;
}
.tree li {
  display: flex;
  align-items: center;
  height: 22px;
  white-space: nowrap;
}
.tree li span {
  margin-left: 4px;
  padding: 2px 1px;
  line-height: 17px;
}
.tree li .picked {
  padding-right: 2px;
  background: #abe0ff;
  color: #222;
}
.tree li .tight {
  margin-left: 0;
}
.fresh {
  margin-left: 5px;
}
.lv2 {
  padding-left: 20px;
}
.lv3 {
  padding-left: 40px;
}
.lv4 {
  padding-left: 60px;
}
.twist {
  width: 18px;
  height: 16px;
  margin-right: 2px;
}
.twist::before {
  content: "";
}
.twist.open::before {
  border: solid transparent;
  border-width: 8px 5px 0;
  border-top-color: #848484;
}
.twist.closed::before {
  border: solid transparent;
  border-width: 5px 0 5px 7px;
  border-left-color: #848484;
}
.insert {
  height: 7px;
  margin: 4px 5px 0 11px;
  border: solid #5ec63e;
  border-width: 0 2px;
  background: linear-gradient(#5ec63e, #5ec63e) center / 100% 2px no-repeat;
}

/* Graphics area */
.viewport {
  position: relative;
  flex: 1;
  min-width: 0;
  background: linear-gradient(#ebfbfb, #daefe8);
}
.scene {
  width: 100%;
  height: 100%;
}
.view-tools {
  position: absolute;
  top: 7px;
  left: 50%;
  display: flex;
  padding: 3px 2px 3px 1px;
  border: 1px solid #9a9d9f;
  background: #f8f9fc;
  transform: translateX(-50%);
}
.view-tools button {
  position: relative;
  width: 26px;
  height: 24px;
}
.view-tools .on {
  width: 24px;
  margin: 0 1px;
  border: 1px solid #9a9d9f;
  background: #dcdee2;
}
.corner {
  position: absolute;
  right: 1px;
  bottom: 2px;
}
.slide {
  position: absolute;
  top: 0;
  left: 1px;
  width: 186px;
  height: 90px;
  padding: 0 12px;
  border: 1px solid #ccd3d4;
  background: #fbfbfc;
}
.dots {
  height: 16px;
  line-height: 16px;
  text-align: center;
}
.slide label {
  display: block;
  margin-top: 20px;
}
.slide input {
  display: block;
  width: 160px;
  height: 23px;
  padding: 0 5px;
  border: 1px solid #a9abad;
  outline: 1px solid #fff;
  outline-offset: -2px;
  background: #f4f0fd;
  color: #444;
  font: inherit;
}

/* Status bar */
.status {
  display: flex;
  flex: none;
  height: 25px;
  padding: 6px 19px 0 6px;
  border-top: 1px solid #a9b5b5;
  background: #f7f9fb;
}
.status button {
  flex: none;
  width: 26px;
  height: 24px;
}
.status .on {
  width: 22px;
  border: 1px solid #a9acae;
  background: #dcdee0;
}
.status .bar {
  height: 24px;
  margin: 0 2px;
}
.status .first {
  margin-left: 6px;
}
.prompt {
  margin: 3px 2px 0;
}
.message {
  margin-right: auto;
  font-size: 11px;
}
.status .find {
  border: 1px solid #b5b8ba;
}
.status .find-menu {
  width: 16px;
  border: solid #b5b8ba;
  border-width: 1px 1px 0 0;
}
.count {
  width: 93px;
  padding: 1px 0 0 1px;
}
.filter {
  display: flex;
  width: 177px;
  height: 24px;
  border: 1px solid #a9acae;
  background: #f9fafb;
}
.filter select {
  flex: 1;
  appearance: none;
  padding: 0 8px;
  border: 0;
  border-right: 1px solid #a9acae;
  background: none;
  color: inherit;
  font: inherit;
}
.filter svg {
  margin: 10px 3px;
}

/* Forum mark, laid over the scene and the status bar */
.mark {
  position: absolute;
  right: 14px;
  bottom: 6px;
  width: 166px;
  pointer-events: none;
}
.mark-name {
  margin-left: -3px;
  color: #000;
  font-size: 40px;
  font-style: italic;
  font-weight: 300;
  line-height: 40px;
  white-space: nowrap;
}
.fire {
  margin-right: 4px;
  color: #ff6530;
}
.mark svg {
  position: absolute;
  top: -18px;
  left: 63px;
}
.mark-url {
  color: #8d8f98;
  font: italic 18px/20px "Liberation Sans", sans-serif;
}
</style>
